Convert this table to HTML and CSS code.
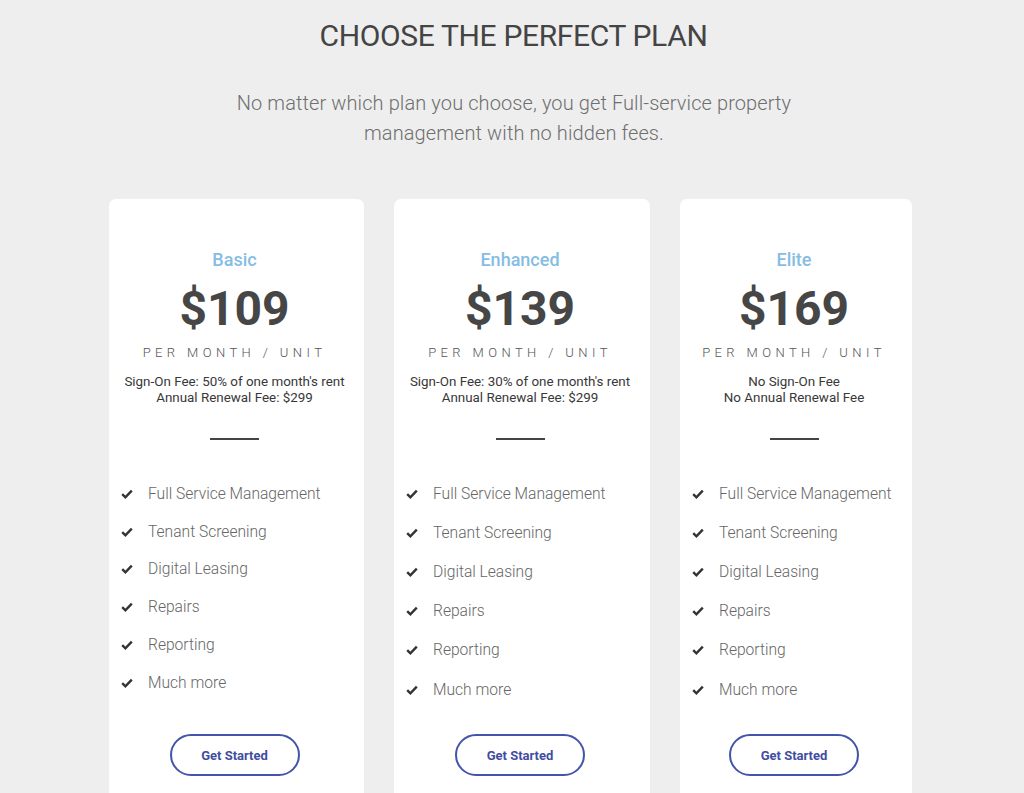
FILE: index.html
```html
<!DOCTYPE html>
<html lang="en">
<head>
<meta charset="utf-8">
<title>Choose the perfect plan</title>
<link rel="stylesheet" href="styles.css">
</head>
<body>
<section class="pricing">
  <h1 class="title">CHOOSE THE PERFECT PLAN</h1>
  <p class="subtitle">No matter which plan you choose, you get Full-service property<br>management with no hidden fees.</p>
  <div class="cards">
    <div class="card card-tight">
      <h2 class="plan">Basic</h2>
      <div class="price">$109</div>
      <div class="per">PER MONTH / UNIT</div>
      <p class="fees">Sign-On Fee: 50% of one month's rent<br>Annual Renewal Fee: $299</p>
      <hr class="divider">
      <ul class="features">
        <li><svg class="check" viewBox="0 0 12 10"><path d="M1.2 5.2 L4.4 8.3 L10.8 1.6"/></svg>Full Service Management</li>
        <li><svg class="check" viewBox="0 0 12 10"><path d="M1.2 5.2 L4.4 8.3 L10.8 1.6"/></svg>Tenant Screening</li>
        <li><svg class="check" viewBox="0 0 12 10"><path d="M1.2 5.2 L4.4 8.3 L10.8 1.6"/></svg>Digital Leasing</li>
        <li><svg class="check" viewBox="0 0 12 10"><path d="M1.2 5.2 L4.4 8.3 L10.8 1.6"/></svg>Repairs</li>
        <li><svg class="check" viewBox="0 0 12 10"><path d="M1.2 5.2 L4.4 8.3 L10.8 1.6"/></svg>Reporting</li>
        <li><svg class="check" viewBox="0 0 12 10"><path d="M1.2 5.2 L4.4 8.3 L10.8 1.6"/></svg>Much more</li>
      </ul>
      <a class="btn" href="#">Get Started</a>
    </div>
    <div class="card">
      <h2 class="plan">Enhanced</h2>
      <div class="price">$139</div>
      <div class="per">PER MONTH / UNIT</div>
      <p class="fees">Sign-On Fee: 30% of one month's rent<br>Annual Renewal Fee: $299</p>
      <hr class="divider">
      <ul class="features">
        <li><svg class="check" viewBox="0 0 12 10"><path d="M1.2 5.2 L4.4 8.3 L10.8 1.6"/></svg>Full Service Management</li>
        <li><svg class="check" viewBox="0 0 12 10"><path d="M1.2 5.2 L4.4 8.3 L10.8 1.6"/></svg>Tenant Screening</li>
        <li><svg class="check" viewBox="0 0 12 10"><path d="M1.2 5.2 L4.4 8.3 L10.8 1.6"/></svg>Digital Leasing</li>
        <li><svg class="check" viewBox="0 0 12 10"><path d="M1.2 5.2 L4.4 8.3 L10.8 1.6"/></svg>Repairs</li>
        <li><svg class="check" viewBox="0 0 12 10"><path d="M1.2 5.2 L4.4 8.3 L10.8 1.6"/></svg>Reporting</li>
        <li><svg class="check" viewBox="0 0 12 10"><path d="M1.2 5.2 L4.4 8.3 L10.8 1.6"/></svg>Much more</li>
      </ul>
      <a class="btn" href="#">Get Started</a>
    </div>
    <div class="card">
      <h2 class="plan">Elite</h2>
      <div class="price">$169</div>
      <div class="per">PER MONTH / UNIT</div>
      <p class="fees">No Sign-On Fee<br>No Annual Renewal Fee</p>
      <hr class="divider">
      <ul class="features">
        <li><svg class="check" viewBox="0 0 12 10"><path d="M1.2 5.2 L4.4 8.3 L10.8 1.6"/></svg>Full Service Management</li>
        <li><svg class="check" viewBox="0 0 12 10"><path d="M1.2 5.2 L4.4 8.3 L10.8 1.6"/></svg>Tenant Screening</li>
        <li><svg class="check" viewBox="0 0 12 10"><path d="M1.2 5.2 L4.4 8.3 L10.8 1.6"/></svg>Digital Leasing</li>
        <li><svg class="check" viewBox="0 0 12 10"><path d="M1.2 5.2 L4.4 8.3 L10.8 1.6"/></svg>Repairs</li>
        <li><svg class="check" viewBox="0 0 12 10"><path d="M1.2 5.2 L4.4 8.3 L10.8 1.6"/></svg>Reporting</li>
        <li><svg class="check" viewBox="0 0 12 10"><path d="M1.2 5.2 L4.4 8.3 L10.8 1.6"/></svg>Much more</li>
      </ul>
      <a class="btn" href="#">Get Started</a>
    </div>
  </div>
</section>
</body>
</html>
```

FILE: styles.css
```css
* { box-sizing: border-box; }

html, body {
  margin: 0;
  padding: 0;
  background: #eeeeee;
  font-family: Roboto, "Liberation Sans", Arial, sans-serif;
  overflow: hidden;
  height: 793px;
}

.pricing {
  padding-top: 18px;
  text-align: center;
}

.title {
  margin: 0;
  font-size: 30px;
  font-weight: 400;
  letter-spacing: -0.35px;
  line-height: 36px;
  color: #444444;
  padding-left: 3px;
}

.subtitle {
  margin: 34px 0 0;
  padding-left: 4px;
  font-size: 20px;
  font-weight: 300;
  letter-spacing: 0.1px;
  line-height: 30px;
  color: #6f6f6f;
}

.cards {
  display: grid;
  grid-template-columns: 255px 256px 232px;
  column-gap: 30px;
  justify-content: center;
  margin-top: 51px;
  padding-right: 3px;
}

.card {
  background: #ffffff;
  border-radius: 7px;
  padding: 50px 12px 63px 12px;
  display: flex;
  flex-direction: column;
  align-items: center;
  height: 640px;
}

.plan {
  margin: 0;
  font-size: 18px;
  font-weight: 500;
  line-height: 22px;
  color: #86bde3;
  padding-right: 4px;
}

.price {
  margin-top: 10px;
  font-size: 48px;
  font-weight: 700;
  line-height: 56px;
  color: #464646;
  padding-right: 4px;
}

.per {
  margin-top: 8px;
  font-size: 13px;
  font-weight: 300;
  letter-spacing: 4.4px;
  line-height: 16px;
  color: #555555;
  padding-right: 4px;
}

.fees {
  margin: 13px 0 0;
  font-size: 13.4px;
  font-weight: 400;
  line-height: 16px;
  color: #383838;
  padding-right: 4px;
}

.divider {
  margin: 32px 4px 0 0;
  width: 49px;
  height: 2px;
  border: 0;
  background: #444444;
}

.features {
  list-style: none;
  margin: 34px 0 0;
  padding: 0;
  align-self: stretch;
  text-align: left;
}

.features li {
  display: flex;
  align-items: center;
  height: 39.2px;
  font-size: 15.6px;
  font-weight: 300;
  color: #666666;
}

.card-tight .features li {
  height: 37.8px;
}

.card-tight .features {
  margin-top: 35px;
}

.check {
  width: 12px;
  height: 10px;
  margin-right: 15px;
  flex: none;
  fill: none;
  stroke: #333333;
  stroke-width: 2.4;
}

.btn {
  margin-top: auto;
  margin-right: 4px;
  width: 130px;
  height: 42px;
  border: 2px solid #4453ac;
  border-radius: 21px;
  display: flex;
  align-items: center;
  justify-content: center;
  font-size: 13px;
  font-weight: 700;
  color: #3f4e9f;
  text-decoration: none;
}
```
